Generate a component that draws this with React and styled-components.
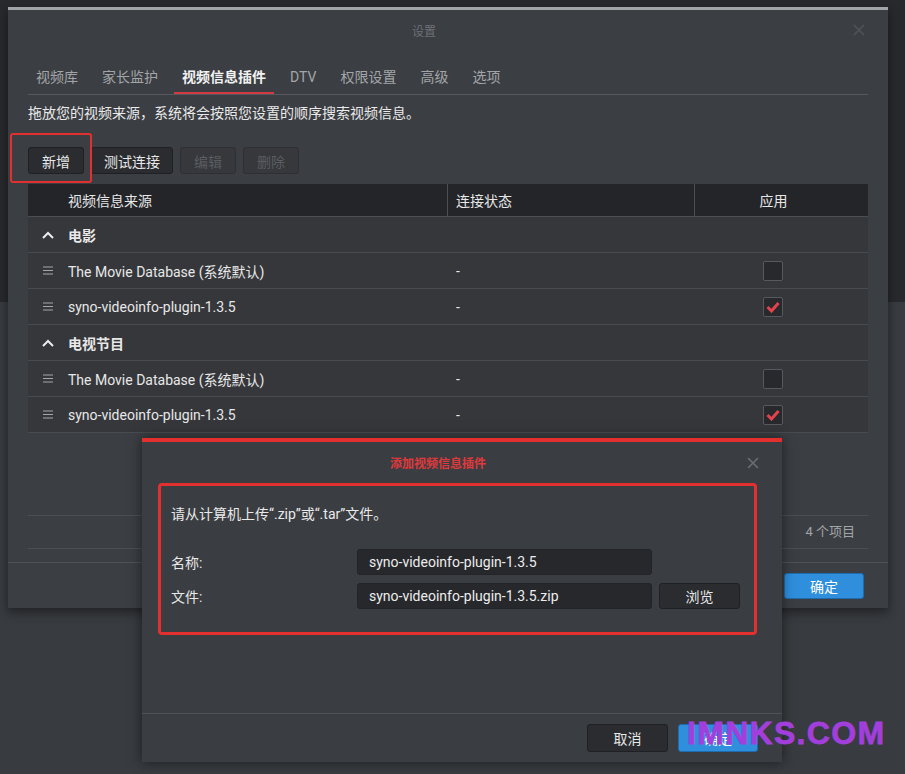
import styled, { createGlobalStyle } from "styled-components";

const GlobalStyle = createGlobalStyle`
  html, body {
    margin: 0;
    padding: 0;
    background: #383b3f;
  }
  * {
    box-sizing: border-box;
  }
`;

const FONT = `Roboto, "Noto Sans CJK SC", sans-serif`;

const Desktop = styled.div`
  position: relative;
  width: 905px;
  height: 774px;
  overflow: hidden;
  font-family: ${FONT};
  background: linear-gradient(to bottom, #27292d 0, #27292d 302px, #383b3f 302px);
`;

const Window = styled.div`
  position: absolute;
  left: 8px;
  top: 7px;
  width: 880px;
  height: 601px;
  display: flex;
  flex-direction: column;
  background: #3b3e42;
  border-top: 3px solid #a2a5a8;
  box-shadow: 0 4px 10px rgba(0, 0, 0, 0.45);
`;

const TitleBar = styled.div`
  position: relative;
  height: ${(p) => p.$height || 40}px;
  display: flex;
  align-items: center;
  justify-content: center;
  padding-right: 48px;
  font-size: 12px;
  font-weight: ${(p) => (p.$bold ? 700 : 400)};
  color: ${(p) => p.$color || "#6d7074"};
  flex-shrink: 0;
`;

const CloseBtn = styled.div`
  position: absolute;
  right: ${(p) => p.$right}px;
  top: 50%;
  transform: translateY(-50%);
  width: 12px;
  height: 12px;
  display: flex;
`;

const Tabs = styled.div`
  display: flex;
  gap: 8px;
  margin: 10px 20px 0;
  border-bottom: 1px solid #55585c;
`;

const Tab = styled.div`
  height: 34px;
  line-height: 34px;
  padding: 0 8px;
  font-size: 14px;
  color: ${(p) => (p.$active ? "#f2f2f2" : "#a3a6a9")};
  font-weight: ${(p) => (p.$active ? 700 : 400)};
  box-shadow: ${(p) => (p.$active ? "inset 0 -2px 0 #d03a40" : "none")};
`;

const Body = styled.div`
  flex: 1;
  display: flex;
  flex-direction: column;
  padding: 0 20px;
`;

const Desc = styled.div`
  margin-top: 8px;
  font-size: 14px;
  line-height: 20px;
  color: #eaeaea;
`;

const Toolbar = styled.div`
  position: relative;
  display: flex;
  gap: 7px;
  margin-top: 24px;
`;

const Button = styled.div`
  min-width: ${(p) => p.$min || 56}px;
  height: ${(p) => p.$h || 27}px;
  padding: 0 12px;
  display: flex;
  align-items: center;
  justify-content: center;
  font-size: 14px;
  border-radius: 3px;
  color: ${(p) => (p.$disabled ? "#5a5d61" : p.$primary ? "#ffffff" : "#e8e8e8")};
  background: ${(p) =>
    p.$disabled ? "#36383c" : p.$primary ? "#2f8fdd" : "#2a2c30"};
  border: 1px solid
    ${(p) => (p.$disabled ? "#2d2f32" : p.$primary ? "#1d6cad" : "#1e2023")};
`;

const Highlight = styled.div`
  position: absolute;
  left: -18px;
  top: -14px;
  width: 82px;
  height: 50px;
  border: 2px solid #e2302f;
  border-radius: 3px;
`;

const Table = styled.div`
  margin-top: 10px;
  display: flex;
  flex-direction: column;
  flex: 1;
`;

const HeaderRow = styled.div`
  display: grid;
  grid-template-columns: 419px 247px 1fr;
  height: 33px;
  background: #232529;
  border-bottom: 1px solid #4b4e52;
`;

const HeadCell = styled.div`
  display: flex;
  align-items: center;
  justify-content: ${(p) => (p.$center ? "center" : "flex-start")};
  padding-left: ${(p) => p.$pl || 0}px;
  padding-right: ${(p) => p.$pr || 0}px;
  font-size: 14px;
  color: #e8e8e8;
  border-left: ${(p) => (p.$divider ? "1px solid #4b4e52" : "none")};
`;

const Row = styled.div`
  display: grid;
  grid-template-columns: 419px 247px 1fr;
  height: 36px;
  background: #35373b;
  border-bottom: 1px solid #484b4f;
`;

const Cell = styled.div`
  display: flex;
  align-items: center;
  justify-content: ${(p) => (p.$center ? "center" : "flex-start")};
  padding-left: ${(p) => p.$pl || 0}px;
  padding-right: ${(p) => p.$pr || 0}px;
  font-size: 14px;
  font-weight: ${(p) => (p.$bold ? 700 : 400)};
  color: #e8e8e8;
`;

const Lead = styled.span`
  width: 40px;
  display: flex;
  justify-content: center;
`;

const CheckBox = styled.div`
  width: 20px;
  height: 20px;
  border: 1px solid #56595d;
  border-radius: 2px;
  background: #27292c;
  display: flex;
  align-items: center;
  justify-content: center;
`;

const Spacer = styled.div`
  flex: 1;
`;

const Paging = styled.div`
  height: 34px;
  border-top: 1px solid #4b4e52;
  border-bottom: 1px solid #4b4e52;
  display: flex;
  align-items: center;
  justify-content: flex-end;
  padding: 0 13px 4px 0;
  font-size: 13px;
  color: #a3a6a9;
  margin-bottom: 13px;
`;

const Footer = styled.div`
  height: ${(p) => p.$height || 46}px;
  border-top: 1px solid #4f5256;
  display: flex;
  align-items: center;
  justify-content: flex-end;
  gap: 10px;
  padding: 0 ${(p) => p.$pr || 24}px 0 0;
  flex-shrink: 0;
`;

const Modal = styled.div`
  position: absolute;
  left: 142px;
  top: 438px;
  width: 640px;
  height: 324px;
  display: flex;
  flex-direction: column;
  background: #3a3d41;
  border-top: 4px solid #e2302f;
  box-shadow: 0 0 12px rgba(0, 0, 0, 0.5);
`;

const ModalBody = styled.div`
  flex: 1;
  padding: 0 25px 0 16px;
`;

const Marked = styled.div`
  height: 152px;
  border: 3px solid #e2302f;
  border-radius: 4px;
  padding: 18px 15px 0 10px;
`;

const Hint = styled.div`
  font-size: 14px;
  line-height: 20px;
  color: #eaeaea;
`;

const Form = styled.div`
  margin-top: 25px;
  display: grid;
  grid-template-columns: 179px 295px auto;
  row-gap: 8px;
  column-gap: 7px;
  align-items: center;
`;

const Label = styled.div`
  font-size: 14px;
  color: #e8e8e8;
`;

const Input = styled.div`
  height: 26px;
  display: flex;
  align-items: center;
  padding-left: 11px;
  font-size: 14px;
  color: #ededed;
  background: #26282b;
  border: 1px solid #222427;
  border-radius: 3px;
`;

const Watermark = styled.div`
  position: absolute;
  left: 687px;
  top: 715px;
  font-family: "Liberation Sans", Arial, sans-serif;
  font-weight: 700;
  font-size: 32px;
  line-height: 36px;
  color: #a23fdc;
  letter-spacing: 1.3px;
  -webkit-text-stroke: 0.8px #a23fdc;
`;

const Close = ({ color }) => (
  <svg width="12" height="12" viewBox="0 0 12 12">
    <path d="M1 1 L11 11 M11 1 L1 11" stroke={color} strokeWidth="1.6" />
  </svg>
);

const Handle = () => (
  <svg width="10" height="9" viewBox="0 0 10 9">
    <path d="M0 1 H10 M0 4.5 H10 M0 8 H10" stroke="#a6a9ac" strokeWidth="1" />
  </svg>
);

const Chevron = () => (
  <svg width="12" height="8" viewBox="0 0 12 8">
    <polyline points="1,7 6,2 11,7" fill="none" stroke="#ececec" strokeWidth="2" />
  </svg>
);

const Check = () => (
  <svg width="14" height="12" viewBox="0 0 14 12">
    <path d="M1.5 6 L5.5 10 L12.5 2" fill="none" stroke="#e2434c" strokeWidth="3" />
  </svg>
);

const groups = [
  {
    name: "电影",
    items: [
      { name: "The Movie Database (系统默认)", on: false },
      { name: "syno-videoinfo-plugin-1.3.5", on: true },
    ],
  },
  {
    name: "电视节目",
    items: [
      { name: "The Movie Database (系统默认)", on: false },
      { name: "syno-videoinfo-plugin-1.3.5", on: true },
    ],
  },
];

const tabs = ["视频库", "家长监护", "视频信息插件", "DTV", "权限设置", "高级", "选项"];

export default function App() {
  return (
    <Desktop>
      <GlobalStyle />
      <Window>
        <TitleBar>
          设置
          <CloseBtn $right={23}>
            <Close color="#505357" />
          </CloseBtn>
        </TitleBar>
        <Tabs>
          {tabs.map((t) => (
            <Tab key={t} $active={t === "视频信息插件"}>
              {t}
            </Tab>
          ))}
        </Tabs>
        <Body>
          <Desc>拖放您的视频来源，系统将会按照您设置的顺序搜索视频信息。</Desc>
          <Toolbar>
            <Button>新增</Button>
            <Button>测试连接</Button>
            <Button $disabled>编辑</Button>
            <Button $disabled>删除</Button>
            <Highlight />
          </Toolbar>
          <Table>
            <HeaderRow>
              <HeadCell $pl={40}>视频信息来源</HeadCell>
              <HeadCell $pl={8} $divider>
                连接状态
              </HeadCell>
              <HeadCell $center $pr={16} $divider>
                应用
              </HeadCell>
            </HeaderRow>
            {groups.map((g) => (
              <div key={g.name}>
                <Row>
                  <Cell $bold>
                    <Lead>
                      <Chevron />
                    </Lead>
                    {g.name}
                  </Cell>
                  <Cell />
                  <Cell />
                </Row>
                {g.items.map((it) => (
                  <Row key={it.name}>
                    <Cell>
                      <Lead>
                        <Handle />
                      </Lead>
                      {it.name}
                    </Cell>
                    <Cell $pl={9}>-</Cell>
                    <Cell $center $pr={16}>
                      <CheckBox>{it.on && <Check />}</CheckBox>
                    </Cell>
                  </Row>
                ))}
              </div>
            ))}
            <Spacer />
            <Paging>4 个项目</Paging>
          </Table>
        </Body>
        <Footer $pr={24}>
          <Button $primary $min={80} $h={26}>
            确定
          </Button>
        </Footer>
      </Window>

      <Modal>
        <TitleBar $height={41} $color="#e0393c" $bold>
          添加视频信息插件
          <CloseBtn $right={23}>
            <Close color="#6a6d71" />
          </CloseBtn>
        </TitleBar>
        <ModalBody>
          <Marked>
            <Hint>请从计算机上传“.zip”或“.tar”文件。</Hint>
            <Form>
              <Label>名称:</Label>
              <Input>syno-videoinfo-plugin-1.3.5</Input>
              <span />
              <Label>文件:</Label>
              <Input>syno-videoinfo-plugin-1.3.5.zip</Input>
              <Button $min={81} $h={26}>
                浏览
              </Button>
            </Form>
          </Marked>
        </ModalBody>
        <Footer $pr={24} $height={49}>
          <Button $min={81} $h={28}>
            取消
          </Button>
          <Button $primary $min={80} $h={28}>
            确定
          </Button>
        </Footer>
      </Modal>
      <Watermark>IMNKS.COM</Watermark>
    </Desktop>
  );
}
